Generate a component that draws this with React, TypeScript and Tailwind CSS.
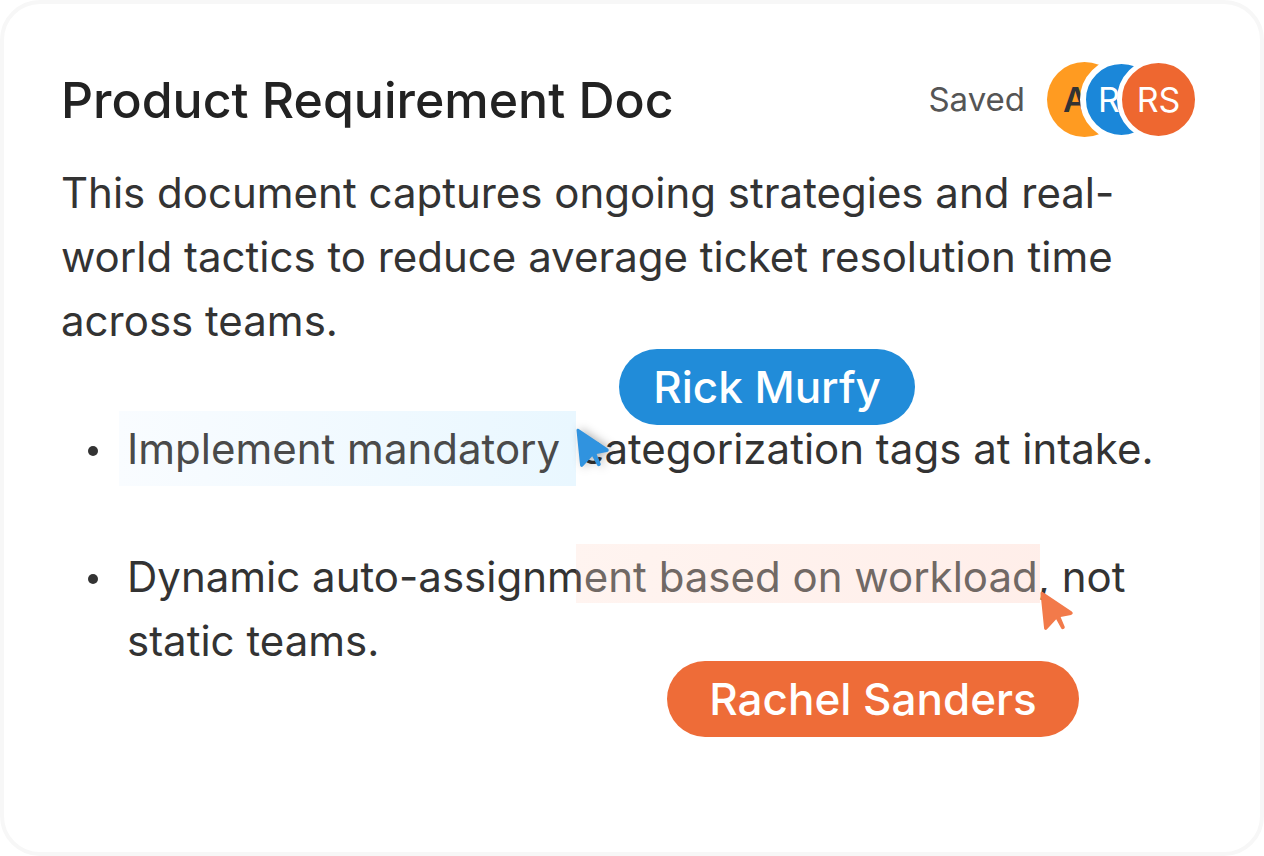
import React from 'react';
import clsx from 'clsx';

interface Collaborator {
  initials: string;
  className: string;
}

const collaborators: Collaborator[] = [
  { initials: 'A', className: 'size-[75px] pl-4 bg-[#ff9b21] text-[#333333] font-semibold' },
  { initials: 'R', className: '-ml-[42px] size-[83px] pl-3 border-6 border-white bg-[#1b87d9] text-white' },
  { initials: 'RS', className: '-ml-[46px] size-[83px] justify-center border-5 border-white bg-[#ee6730] text-white' },
];

const Cursor: React.FC<{ className?: string }> = ({ className }) => (
  <svg viewBox="0 0 34 40" fill="currentColor" className={clsx('absolute h-[40px] w-[34px]', className)} aria-hidden="true">
    <path d="M0.5 2.2C0.4 0.9 1.6 0.2 2.7 1L31.8 20.6C33.4 21.7 32.9 23.6 31 23.9L20.6 26L24.7 35.8C25.4 37.6 22.3 39.4 21.3 37.6L16.2 28.3L7 38.3C6 39.4 4.3 39 4.1 37.5Z" />
  </svg>
);

const NameTag: React.FC<{ name: string; className: string }> = ({ name, className }) => (
  <span
    className={clsx(
      'absolute rounded-full py-1.5 text-[44px] leading-[64px] font-medium whitespace-nowrap text-white',
      className
    )}
  >
    {name}
  </span>
);

const Bullet: React.FC<{ children: React.ReactNode }> = ({ children }) => (
  <li className="flex gap-[29px]">
    <span className="mt-[29px] size-[10px] shrink-0 rounded-full bg-[#333333]" />
    <p>{children}</p>
  </li>
);

export default function App() {
  return (
    <main className="min-h-screen rounded-[40px] border-4 border-[#f7f7f7] bg-white px-[57px] py-[54px] font-['Inter',sans-serif] text-[#333333]">
      {/* Header */}
      <header className="flex items-center justify-between gap-6">
        <h1 className="text-[50px] leading-[64px] font-medium text-[#222222]">Product Requirement Doc</h1>
        <div className="mr-[3px] flex items-center gap-[22px]">
          <span className="text-[33px] text-[#555555]">Saved</span>
          <div className="flex items-center">
            {collaborators.map(person => (
              <span
                key={person.initials}
                className={clsx('flex items-center rounded-full text-[34px] leading-none', person.className)}
              >
                {person.initials}
              </span>
            ))}
          </div>
        </div>
      </header>

      {/* Body */}
      <div className="mt-5 text-[42px] leading-[64px]">
        <p>
          This document captures ongoing strategies and real-world tactics to reduce average ticket resolution time
          across teams.
        </p>

        <ul className="mt-16 space-y-16 pl-[27px]">
          <Bullet>
            <mark className="relative -mx-2 bg-transparent bg-linear-to-r from-[#f9fcff] to-[#e9f7ff] py-3 pr-4 pl-2 text-[#4a4a4a]">
              Implement mandatory
              <Cursor className="top-[17px] left-full text-[#3093df] drop-shadow-[3px_0_5px_rgba(0,0,0,0.3)]" />
              <NameTag name="Rick Murfy" className="-top-[62px] left-full ml-[43px] bg-[#218cd9] px-[34px]" />
            </mark>{' '}
            categorization tags at intake.
          </Bullet>
          <Bullet>
            Dynamic auto-assignm
            <mark className="relative -ml-2 bg-transparent bg-linear-to-r from-[#ffb59b]/15 to-[#ff8f70]/15 pt-[7px] pr-0.5 pb-px pl-2 text-[#716965]">
              ent based on workload
              <Cursor className="top-[47px] left-full text-[#f27a4a]" />
              <NameTag name="Rachel Sanders" className="top-[117px] -right-[39px] bg-[#ee6c38] px-[42px]" />
            </mark>
            <span className="-ml-0.5">, not static teams.</span>
          </Bullet>
        </ul>
      </div>
    </main>
  );
}
